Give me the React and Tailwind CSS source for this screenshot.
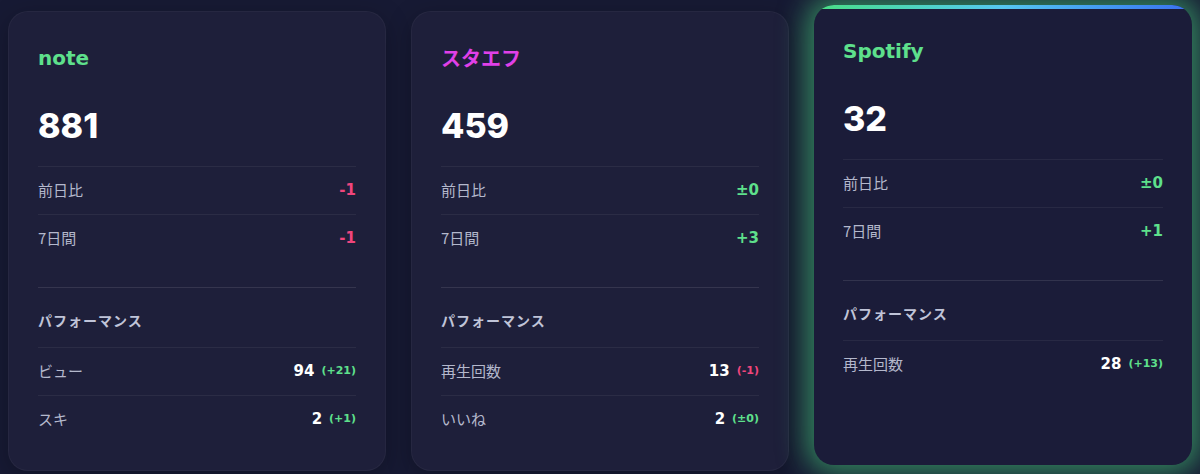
import React from "react";

const jp = { fontFamily: '"Noto Sans CJK JP", "Noto Sans", sans-serif' };
const tech = { fontFamily: '"DejaVu Sans", "Noto Sans", sans-serif' };
const big = { fontFamily: 'Inter, "Noto Sans", sans-serif' };

function Row({ label, value, tone, sub, subTone }) {
  const toneCls = tone === "red" ? "text-[#f0457c]" : tone === "green" ? "text-[#5ee08c]" : "text-white";
  const subCls = subTone === "red" ? "text-[#f0457c]" : "text-[#5ee08c]";
  return (
    <div className="flex h-[48px] items-center justify-between border-t border-white/[0.06]">
      <span style={jp} className="text-[15px] text-[#b4b8cc]">{label}</span>
      <span className="flex items-center gap-[7px]">
        <span style={tech} className={`text-[15px] font-bold ${toneCls}`}>{value}</span>
        {sub && <span style={tech} className={`text-[11px] font-bold ${subCls}`}>{sub}</span>}
      </span>
    </div>
  );
}

function Card({ title, titleCls, titleFont, total, daily, dailyTone, week, weekTone, perf, featured }) {
  return (
    <div
      className={`relative flex h-[460px] w-[378px] shrink-0 flex-col overflow-hidden rounded-[20px] px-[29px] pt-[32px] ${
        featured
          ? "bg-[#1b1c39] shadow-[0_0_28px_8px_rgba(74,222,128,0.55)]"
          : "mt-[6px] border border-white/[0.04] bg-[#1e1f3a] shadow-[0_6px_24px_rgba(0,0,0,0.25)]"
      }`}
    >
      {featured && (
        <div className="absolute left-0 right-0 top-0 h-[4px] bg-gradient-to-r from-[#4ade80] via-[#56c6f0] to-[#3b6ff0]" />
      )}
      <div style={titleFont} className={`h-[28px] text-[20px] font-bold leading-[28px] ${titleCls}`}>{title}</div>
      <div style={big} className="mt-[34px] h-[40px] text-[34px] font-extrabold leading-[40px] text-white">{total}</div>
      <div className="mt-[20px]">
        <Row label="前日比" value={daily} tone={dailyTone} />
        <Row label="7日間" value={week} tone={weekTone} />
      </div>
      <div className="mt-[25px] border-t border-white/[0.1]">
        <div style={jp} className="flex h-[59px] items-center pt-[6px] text-[14px] font-bold tracking-[1px] text-[#c0c4d8]">
          パフォーマンス
        </div>
        {perf.map((p) => (
          <Row key={p.label} label={p.label} value={p.value} sub={p.sub} subTone={p.subTone} />
        ))}
      </div>
    </div>
  );
}

export default function App() {
  return (
    <div className="flex h-[474px] w-[1200px] items-start gap-[25px] overflow-hidden bg-[#171a34] pl-[8px] pt-[5px]">
      <Card
        title="note"
        titleCls="text-[#5ee08c]"
        titleFont={tech}
        total="881"
        daily="-1"
        dailyTone="red"
        week="-1"
        weekTone="red"
        perf={[
          { label: "ビュー", value: "94", sub: "(+21)" },
          { label: "スキ", value: "2", sub: "(+1)" },
        ]}
      />
      <Card
        title="スタエフ"
        titleCls="text-[#e040e8]"
        titleFont={jp}
        total="459"
        daily="±0"
        dailyTone="green"
        week="+3"
        weekTone="green"
        perf={[
          { label: "再生回数", value: "13", sub: "(-1)", subTone: "red" },
          { label: "いいね", value: "2", sub: "(±0)" },
        ]}
      />
      <Card
        featured
        title="Spotify"
        titleCls="text-[#5ee08c]"
        titleFont={tech}
        total="32"
        daily="±0"
        dailyTone="green"
        week="+1"
        weekTone="green"
        perf={[{ label: "再生回数", value: "28", sub: "(+13)" }]}
      />
    </div>
  );
}
